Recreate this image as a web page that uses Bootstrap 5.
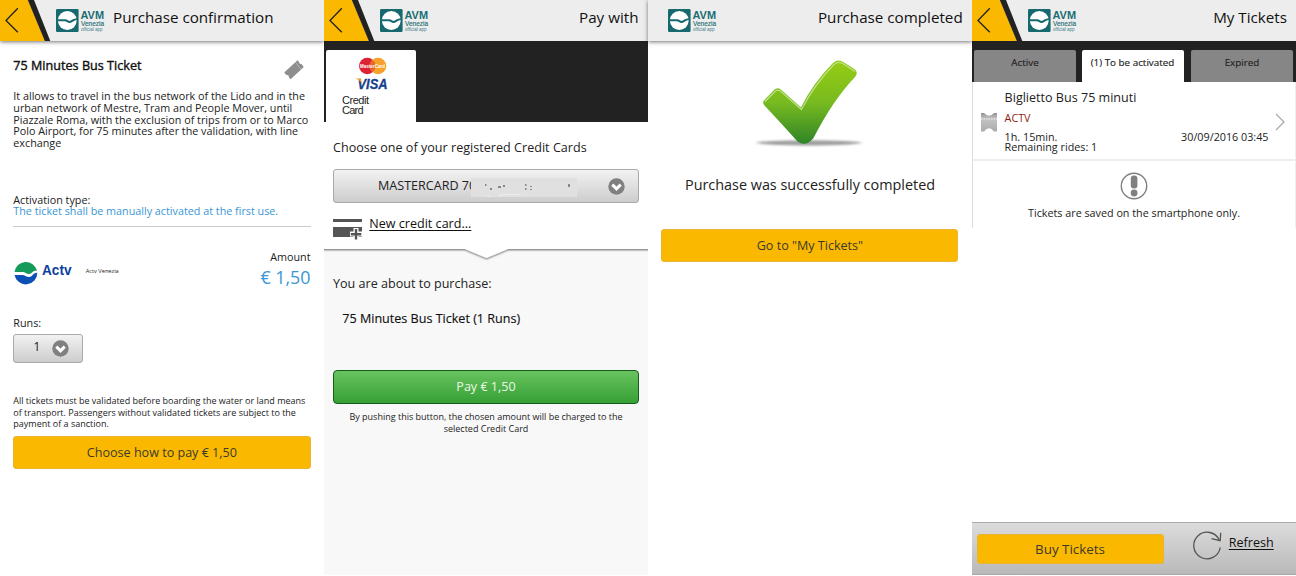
<!DOCTYPE html>
<html lang="en">
<head>
<meta charset="utf-8">
<meta name="viewport" content="width=device-width, initial-scale=1">
<title>AVM Venezia</title>
<link href="https://cdn.jsdelivr.net/npm/bootstrap@5.3.0/dist/css/bootstrap.min.css" rel="stylesheet">
<style>
body{font-family:"Open Sans","Noto Sans",sans-serif;font-size:10.77px;line-height:11.7px;color:#222;background:#fff;width:1296px;height:576px;overflow:hidden}
.phone{width:324px;height:576px;flex:none;position:relative}
.topbar{height:41px;background:#ededed;flex:none;position:relative;z-index:1}
.topbar.lift{box-shadow:0 1px 4px rgba(0,0,0,.55)}
.topbar h1{font-size:15.2px;line-height:20px;margin:0;padding-top:7px;color:#111;font-weight:400;white-space:nowrap}
.back{width:52px;height:41px;flex:none}
.brand{width:52px;height:41px;flex:none}
svg{display:block;flex:none}
svg text{font-family:"Liberation Sans",Arial,sans-serif}
.t12{font-size:12.57px;line-height:16px}
.t9{font-size:9px;line-height:11.7px}
.heavy{-webkit-text-stroke:.4px currentColor;letter-spacing:.03px;color:#111}
.semi{-webkit-text-stroke:.15px currentColor}
.sky{color:#3a96d6}
.ln{white-space:nowrap}
.btn-avm{display:block;background:#fab900;border:1px solid #e9b530;border-radius:3px;color:#3b3a2c;font-size:12.57px;line-height:31px;padding:0;text-align:center;width:100%}
.btn-gray{display:flex;align-items:center;background:linear-gradient(#f2f2f2,#cdcdcd);border:1px solid #a9a9a9;border-radius:3px;color:#222;font-size:12.57px;padding:0;line-height:16px}
.btn-pay{display:block;width:100%;height:34px;border:1px solid #145c1a;border-radius:4px;background:linear-gradient(#68c35f,#36a036);color:#eaf7e6;font-size:12.57px;line-height:32px;padding:0}
.p1{padding:19px 13.5px 0 13.3px}
.dark{background:#222;flex:none}
.paytab{width:90px;height:72px;background:#fff;border-radius:2px 2px 0 0}
.mask{width:106px;height:19px;margin-left:-5px}
.sheet{background:#f8f8f8;flex:1;margin-bottom:1px}
.tab{width:102px;height:32px;background:#868686;border-radius:2px 2px 0 0;color:#222;font-size:9.85px;line-height:24px;text-align:center}
.tab.on{background:#fff}
.panelbox{border-left:1px solid #ddd;border-right:1px solid #eee}
.footbar{height:53px;margin-bottom:1px;border-top:1px solid #aaa;border-bottom:1px solid #aaa;background:linear-gradient(#dcdcdc,#b9b9b9)}
a.plain{color:#111;text-decoration:underline;text-underline-offset:2px;text-decoration-thickness:1px}
</style>
</head>
<body>
<svg width="0" height="0" class="position-absolute">
  <defs>
    <symbol id="back" viewBox="0 0 52 41"><path d="M0 0H28L44.8 41H0z" fill="#fab900"/><path d="M27.800 0H34L50.300 41H44.800z" fill="#222"/><path d="M17.800 8.300L6 20.500L17.800 32.300" fill="none" stroke="#222" stroke-width="1.300"/></symbol>
    <symbol id="avm" viewBox="0 0 52 41">
      <rect x="0" y="9" width="22.600" height="23" rx="1.200" fill="#17696f"/>
      <circle cx="11.300" cy="20.500" r="9.400" fill="#fff"/>
      <path d="M1.500 19.300H9.500C11.500 19.300 12 21.300 14 20.800C16 20.300 16.500 18.500 21 18.500V20.300C17.500 20.300 16.500 22.500 14 23C11.500 23.300 10.500 21.300 8.500 21.300H1.500z" fill="#17696f"/>
      <text x="24.500" y="18.700" font-size="10.500" font-weight="700" fill="#1b6d74" textLength="23.500" lengthAdjust="spacingAndGlyphs">AVM</text>
      <text x="25" y="25.900" font-size="7.200" fill="#1b6d74" stroke="#1b6d74" stroke-width=".15" textLength="23" lengthAdjust="spacingAndGlyphs">Venezia</text>
      <text x="25" y="30.500" font-size="4.600" fill="#3d848a" textLength="21.500" lengthAdjust="spacingAndGlyphs">official app</text>
    </symbol>
    <symbol id="drop" viewBox="0 0 17 17"><circle cx="8.500" cy="8.500" r="8.200" fill="#808080"/><path d="M4.300 6.600L8.500 10.800L12.700 6.600" fill="none" stroke="#fff" stroke-width="3"/></symbol>
    <linearGradient id="tick" x1="0" y1="0" x2="0" y2="1"><stop offset="0" stop-color="#96cc12"/><stop offset=".5" stop-color="#78bb20"/><stop offset="1" stop-color="#2f8427"/></linearGradient>
    <linearGradient id="tk" x1="0" y1="0" x2="0" y2="1"><stop offset="0" stop-color="#8f8f8f"/><stop offset=".3" stop-color="#c4c4c4"/><stop offset="1" stop-color="#ababab"/></linearGradient>
    <filter id="soft" x="-20%" y="-100%" width="140%" height="300%"><feGaussianBlur stdDeviation="2.200 1.100"/></filter>
    <filter id="edge" x="-5%" y="-50%" width="110%" height="220%"><feDropShadow dx="0" dy="1" stdDeviation="1.300" flood-opacity=".6"/></filter>
  </defs>
</svg>
<main class="d-flex">

<section class="phone d-flex flex-column">
  <header class="topbar lift d-flex">
    <svg class="back"><use href="#back"/></svg><svg class="brand ms-1"><use href="#avm"/></svg>
    <h1 style="padding-left:5px">Purchase confirmation</h1>
  </header>
  <div class="p1">
    <div class="d-flex justify-content-between" style="height:30.200px">
      <div class="t12 heavy ln" style="margin-top:-2px">75 Minutes Bus Ticket</div>
      <svg width="22" height="22" style="margin:-1px 5.500px 0 0" viewBox="0 0 22 22"><path d="M1.200 13.500L14.500 1.200L16.200 3C15.800 4.300 17 5.300 18.300 4.800L20.800 8L7.600 20.200L5.800 18.300C6.300 16.800 5 15.600 3.600 16.200z" fill="#8e8e8e"/><path d="M12.600 3.500L17.800 10" stroke="#ddd" stroke-width=".8" stroke-dasharray="1.500 1" fill="none"/></svg>
    </div>
    <div class="ln">It allows to travel in the bus network of the Lido and in the<br>urban network of Mestre, Tram and People Mover, until<br>Piazzale Roma, with the exclusion of trips from or to Marco<br>Polo Airport, for 75 minutes after the validation, with line<br>exchange</div>
    <div class="ln" style="margin-top:44.800px">Activation type:<br><span class="sky">The ticket shall be manually activated at the first use.</span></div>
    <div style="margin-top:9px;border-top:1px solid #ccc"></div>
    <div class="d-flex justify-content-between">
      <div class="d-flex" style="margin-top:34px">
        <svg width="60" height="25" viewBox="0 0 60 25"><path d="M1.500 11A11.500 11.500 0 0 1 24 9.500C19 9.500 19 13 16 13C13 13 13 11 9 11z" fill="#149a5b"/><path d="M1.500 14H9C12 14 13 16 16 16C19.500 16 19.500 11.700 24.300 11.700A11.500 11.500 0 0 1 1.500 14z" fill="#0c4fb5"/><text x="29" y="14.300" font-size="14.400" font-weight="700" fill="#0d3f9f" textLength="29.500" lengthAdjust="spacingAndGlyphs">Actv</text></svg>
        <span class="ln" style="font-size:5.650px;padding:5.500px 0 0 12.500px">Actv Venezia</span>
      </div>
      <div class="text-end" style="padding-top:24px"><div class="ln">Amount</div><div class="sky ln" style="font-size:17.850px;line-height:28px">€ 1,50</div></div>
    </div>
    <div style="margin-top:26.500px">Runs:</div>
    <button class="btn-gray" style="width:70px;height:29px;margin-top:4.800px"><span style="margin:-2px 11.500px 0 19px">1</span><svg width="17" height="17"><use href="#drop"/></svg></button>
    <div class="t9 ln" style="margin-top:32.200px">All tickets must be validated before boarding the water or land means<br>of transport. Passengers without validated tickets are subject to the<br>payment of a sanction.</div>
    <button class="btn-avm" style="margin-top:6.300px;line-height:30px;height:33px">Choose how to pay € 1,50</button>
  </div>
</section>

<section class="phone d-flex flex-column">
  <header class="topbar d-flex">
    <svg class="back"><use href="#back"/></svg><svg class="brand ms-1"><use href="#avm"/></svg>
    <h1 class="ms-auto" style="padding-right:9.500px">Pay with</h1>
  </header>
  <div class="dark" style="height:81px;padding:9px 0 0 2px">
    <div class="paytab">
      <svg width="90" height="72" viewBox="0 0 90 72"><circle cx="41.300" cy="16" r="8.300" fill="#dd2233"/><circle cx="52" cy="16" r="8.300" fill="#f6a12b"/><path d="M46.600 9.700A8.300 8.300 0 0 1 46.600 22.300A8.300 8.300 0 0 1 46.600 9.700z" fill="#e9632d"/><text x="34" y="18.200" font-size="6" font-weight="700" fill="#fff" textLength="25" lengthAdjust="spacingAndGlyphs">MasterCard</text><text x="31.500" y="38.800" font-size="14.500" font-weight="700" font-style="italic" fill="#173f8c" stroke="#173f8c" stroke-width=".3" textLength="30" lengthAdjust="spacingAndGlyphs">VISA</text><path d="M29 28.500H34.500L36.300 33.500C34 30.800 32 29.500 29 28.500z" fill="#f0a92f"/><text x="16" y="54.200" font-size="11" fill="#222" textLength="27">Credit</text><text x="16" y="64.200" font-size="11" fill="#222" textLength="21.500">Card</text></svg>
    </div>
  </div>
  <div style="height:127px;flex:none;padding:18px 9px 0">
    <div class="t12 ln" style="letter-spacing:.02px">Choose one of your registered Credit Cards</div>
    <button class="btn-gray w-100" style="height:34px;margin-top:13px;padding:0 13px 0 44px"><span class="ln">MASTERCARD 70</span><svg class="mask" viewBox="0 0 106 19" style="margin-top:3px"><rect width="106" height="19" fill="#e0e0e0"/><path d="M14 7h1.500M20 10v2M27 9h3M32 8h2M54 7h1.500M54 11h1.500M60 8v1M60 11v1M98 6v3" stroke="#333" stroke-width="1"/><path d="M16 18Q26 22 28 18.500T50 17" stroke="#eee" stroke-width="1" fill="none"/></svg><svg class="ms-auto" width="17" height="17"><use href="#drop"/></svg></button>
    <div class="d-flex" style="margin-top:12.500px">
      <svg width="30" height="22" viewBox="0 0 30 22" style="margin-top:3.500px"><path d="M0 0H29V3H0zM0 8H29V18H0z" fill="#555"/><path d="M23 9V21M17 15H29" stroke="#fff" stroke-width="5"/><path d="M23 10V20.500M17.800 15.200H28.300" stroke="#555" stroke-width="2.400"/></svg>
      <a class="plain t12 ln" style="margin-left:6.300px">New credit card...</a>
    </div>
  </div>
  <div class="sheet">
    <svg width="324" height="16" viewBox="0 0 324 16"><g filter="url(#edge)"><path d="M-10 -10H334V0H184L162.500 9L141 0H-10z" fill="#fff"/></g></svg>
    <div style="padding:11px 9px 0">
      <div class="t12 ln">You are about to purchase:</div>
      <div class="t12 ln semi" style="margin:18.700px 0 0 9.300px;color:#111">75 Minutes Bus Ticket (1 Runs)</div>
      <button class="btn-pay" style="margin-top:43.300px">Pay € 1,50</button>
      <div class="t9 text-center" style="line-height:12.300px;margin-top:7px">By pushing this button, the chosen amount will be charged to the<br>selected Credit Card</div>
    </div>
  </div>
</section>

<section class="phone d-flex flex-column">
  <header class="topbar lift d-flex">
    <svg class="brand" style="margin-left:20px"><use href="#avm"/></svg>
    <h1 class="ms-auto" style="padding-right:9.300px">Purchase completed</h1>
  </header>
  <svg class="mx-auto" width="114" height="96" viewBox="105 54 114 96" style="margin-top:13px">
    <ellipse cx="161" cy="142.800" rx="52" ry="2.600" fill="#777" opacity=".7" filter="url(#soft)"/>
    <path d="M116 100.500L126 90Q130 86.500 134 90.500L153 107.500Q165 83 185 63Q190.500 58.500 196 62.500L207 69.500Q210.500 73 207 77Q185 100 165.500 138Q158 147.500 149.500 141.500Q132 122 116.500 105.500Q114 102.500 116 100.500z" fill="url(#tick)"/>
    <path d="M117 101.500L127 91.500Q130 88.500 133.500 92L153.500 109.500Q166 85 186 64.500Q191 60.500 195.500 64L207 71.500" fill="none" stroke="#bfe28a" stroke-width="1.100"/>
  </svg>
  <div class="text-center ln" style="font-size:14.400px;line-height:20px;margin-top:24.500px;color:#222">Purchase was successfully completed</div>
  <div style="padding:34px 13.600px 0 13.400px"><button class="btn-avm">Go to "My Tickets"</button></div>
</section>

<section class="phone d-flex flex-column">
  <header class="topbar d-flex">
    <svg class="back"><use href="#back"/></svg><svg class="brand ms-1"><use href="#avm"/></svg>
    <h1 class="ms-auto" style="padding-right:9px">My Tickets</h1>
  </header>
  <div class="dark d-flex justify-content-between" style="height:41px;padding:9px 3px 0 2px">
    <div class="tab semi">Active</div><div class="tab on semi" style="margin-right:2px">(1) To be activated</div><div class="tab semi">Expired</div>
  </div>
  <div class="panelbox" style="height:146px">
    <div class="d-flex" style="height:79px;border-bottom:2px solid #eee;padding:7.500px 10px 0 8px">
      <svg width="16" height="19" viewBox="0 0 16 19" style="margin-top:23.500px"><path d="M0 0H3Q8 5.500 13 0H16V18.500H13Q8 12 3 18.500H0z" fill="url(#tk)"/><path d="M0 6H16" stroke="#eee" stroke-dasharray="1.500 1"/></svg>
      <div class="flex-fill" style="margin-left:7.600px">
        <div class="t12 ln">Biglietto Bus 75 minuti</div>
        <div class="ln" style="margin-top:6.500px;color:#8a1a10">ACTV</div>
        <div class="d-flex justify-content-between ln" style="margin-top:7.800px;line-height:10px;padding-right:6.500px"><span>1h. 15min.<br>Remaining rides: 1</span><span>30/09/2016 03:45</span></div>
      </div>
      <svg width="10" height="18" viewBox="0 0 10 18" style="margin-top:23.500px"><path d="M1 1L9 9L1 17" fill="none" stroke="#aaa" stroke-width="1.300"/></svg>
    </div>
    <svg class="mx-auto" width="28" height="28" viewBox="0 0 28 28" style="margin-top:10.800px"><circle cx="14" cy="14" r="12.700" fill="none" stroke="#808080" stroke-width="1.400"/><rect x="10.800" y="3.500" width="6.600" height="13" rx="3" fill="#808080"/><circle cx="14.100" cy="21" r="3.400" fill="#808080"/></svg>
    <div class="text-center ln" style="margin-top:7.500px">Tickets are saved on the smartphone only.</div>
  </div>
  <div class="footbar mt-auto d-flex" style="padding-left:4.500px">
    <button class="btn-avm" style="width:187px;height:30px;line-height:28px;font-size:13.400px;margin-top:11px">Buy Tickets</button>
    <svg width="30" height="30" viewBox="0 0 30 30" style="margin:7.500px 0 0 28px"><path d="M28.200 16.500A13.300 13.300 0 1 1 27.300 9.300" fill="none" stroke="#555" stroke-width="1.300"/><path d="M28.700 1.800L28.200 9.700L19.500 7.600" fill="none" stroke="#555" stroke-width="1.300"/></svg>
    <a class="plain t12" style="margin:12px 0 0 7.300px">Refresh</a>
  </div>
</section>
</main>
<script src="https://cdn.jsdelivr.net/npm/bootstrap@5.3.0/dist/js/bootstrap.bundle.min.js"></script>
</body>
</html>
